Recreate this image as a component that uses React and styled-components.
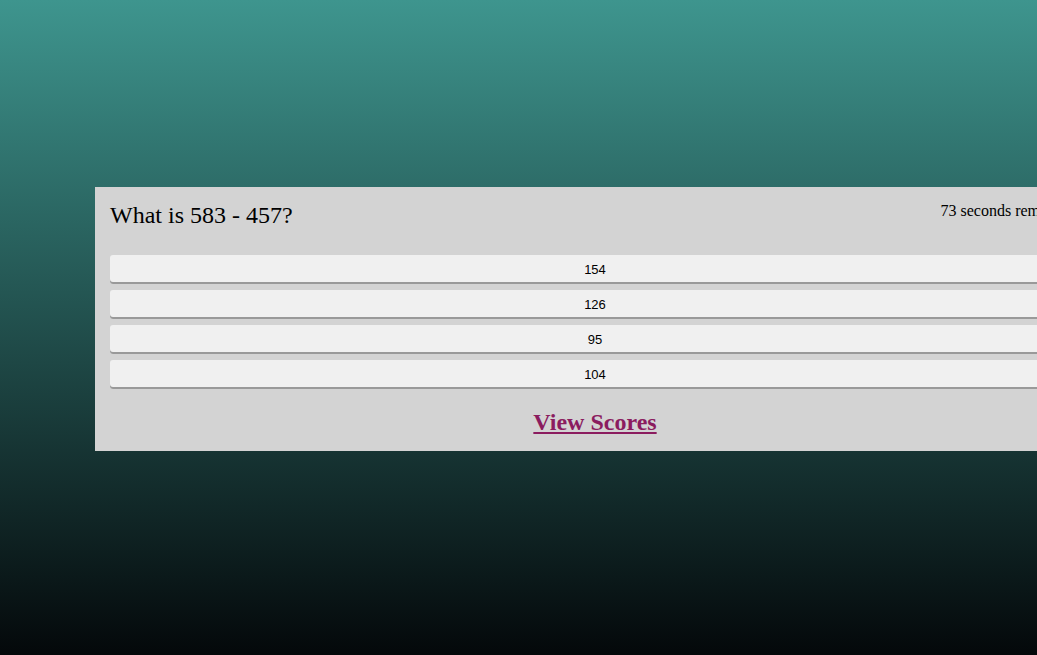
import React from "react";
import styled, { createGlobalStyle } from "styled-components";

const Global = createGlobalStyle`
  html, body { margin: 0; padding: 0; height: 100%; overflow: hidden; }
  body {
    background: linear-gradient(to bottom, #3e958e 0%, #04080a 100%);
    font-family: "Liberation Serif", "Times New Roman", serif;
  }
  #root { padding-top: 187px; padding-left: 95px; }
`;

const Panel = styled.div`
  width: 970px;
  padding: 14px 15px 15px;
  background: #d3d3d3;
`;

const Header = styled.div`
  display: flex;
  justify-content: space-between;
  align-items: flex-start;
  margin-bottom: 26px;
`;

const Question = styled.h2`
  margin: 0;
  font-size: 24px;
  font-weight: normal;
  line-height: 28px;
  color: #000;
`;

const Timer = styled.div`
  font-size: 16px;
  line-height: 18px;
  margin-top: 1px;
  color: #000;
  white-space: nowrap;
`;

const Answers = styled.div`
  display: flex;
  flex-direction: column;
  gap: 6px;
`;

const Answer = styled.button`
  height: 29px;
  border: none;
  border-radius: 3px;
  background: #f0f0f0;
  box-shadow: inset 0 -2px 0 #999;
  padding: 0;
  font-family: "Liberation Sans", Arial, sans-serif;
  font-size: 13px;
  color: #000;
  text-align: center;
`;

const Footer = styled.div`
  text-align: center;
  margin-top: 19px;
`;

const ScoresLink = styled.a`
  font-size: 24px;
  font-weight: bold;
  line-height: 28px;
  color: #8b1c5f;
  text-decoration: underline;
`;

export default function App() {
  const answers = [154, 126, 95, 104];
  return (
    <>
      <Global />
      <Panel>
        <Header>
          <Question>What is 583 - 457?</Question>
          <Timer>73 seconds remaining</Timer>
        </Header>
        <Answers>
          {answers.map((a) => (
            <Answer key={a}>{a}</Answer>
          ))}
        </Answers>
        <Footer>
          <ScoresLink href="#">View Scores</ScoresLink>
        </Footer>
      </Panel>
    </>
  );
}
